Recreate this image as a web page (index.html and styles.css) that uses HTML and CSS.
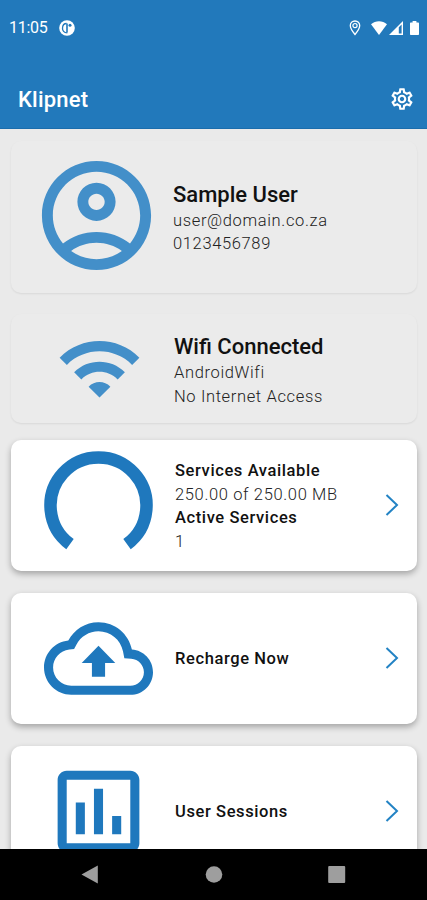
FILE: index.html
```html
<!DOCTYPE html>
<html lang="en">

<head>
    <meta charset="UTF-8">
    <meta name="viewport" content="width=device-width, initial-scale=1.0">
    <title>Klipnet</title>
    <link rel="stylesheet" href="styles.css">
</head>

<body>
    <header class="header">
        <div class="status-bar">
            <span class="time">11:05</span>
            <svg class="app-dot" viewBox="0 0 16 16">
                <circle cx="8" cy="8" r="7.8" fill="#fff"/>
                <path d="M8.300 12.900C4.800 12.900 3.400 10.600 3.500 8C3.600 5.200 5 3.500 7.600 3.500" fill="none" stroke="#2279bb" stroke-width="1.300"/>
                <path d="M8 3.500v9" stroke="#2279bb" stroke-width="1.600"/>
                <circle cx="11" cy="5.200" r="1.500" fill="#2279bb"/>
            </svg>
            <div class="status-icons">
                <svg class="pin" viewBox="0 0 12 16">
                    <path d="M6 1C3.300 1 1.300 3 1.300 5.600C1.300 9 6 14.500 6 14.500S10.700 9 10.700 5.600C10.700 3 8.700 1 6 1z" fill="none" stroke="#fff" stroke-width="1.300"/>
                    <circle cx="6" cy="5.600" r="2.100" fill="none" stroke="#fff" stroke-width="1.200"/>
                </svg>
                <svg class="signal-wifi" viewBox="0 0 16 14">
                    <path d="M0 3.200C4.500-.8 11.500-.8 16 3.200L8 14z" fill="#fff"/>
                </svg>
                <svg class="signal-cell" viewBox="0 0 14 14">
                    <path d="M0 14L14 0v14z" fill="#fff"/>
                    <path d="M9.800 6.200L12.600 3.400v9.200H9.800z" fill="#2279bb"/>
                </svg>
                <svg class="battery" viewBox="0 0 9 14">
                    <path d="M2.600 0h3.800v1.400H8c.6 0 1 .4 1 1V13c0 .6-.4 1-1 1H1c-.6 0-1-.4-1-1V2.400c0-.6.4-1 1-1h1.600z" fill="#fff"/>
                </svg>
            </div>
        </div>
        <div class="app-bar">
            <h1>Klipnet</h1>
            <svg class="settings" viewBox="0 0 24 24">
                <path d="M19.430 12.980c.04-.32.070-.64.070-.98 0-.34-.03-.66-.07-.98l2.110-1.650c.19-.15.240-.42.120-.64l-2-3.460c-.09-.16-.26-.25-.44-.25-.06 0-.12.010-.17.030l-2.490 1c-.52-.4-1.080-.73-1.690-.98l-.38-2.650C14.460 2.180 14.250 2 14 2h-4c-.25 0-.46.180-.49.420l-.38 2.650c-.61.250-1.170.59-1.690.98l-2.490-1c-.06-.02-.12-.03-.18-.03-.17 0-.34.090-.43.250l-2 3.460c-.13.220-.07.490.120.640l2.110 1.650c-.04.320-.07.650-.07.980s.030.660.070.980l-2.110 1.650c-.19.150-.24.420-.12.640l2 3.460c.09.160.260.250.440.250.060 0 .12-.01.170-.03l2.490-1c.52.400 1.080.730 1.690.980l.38 2.650c.03.240.240.420.490.420h4c.25 0 .46-.18.490-.42l.38-2.650c.61-.25 1.170-.59 1.690-.98l2.490 1c.06.020.120.030.180.030.17 0 .34-.09.430-.25l2-3.460c.12-.22.070-.49-.12-.64l-2.110-1.650zm-1.980-1.710c.04.310.050.520.050.730 0 .21-.02.430-.05.730l-.14 1.130.89.700 1.080.840-.7 1.210-1.270-.51-1.040-.42-.9.680c-.43.320-.84.560-1.250.73l-1.060.430-.16 1.130-.2 1.350h-1.400l-.19-1.350-.16-1.130-1.060-.43c-.43-.18-.83-.41-1.230-.71l-.91-.7-1.060.430-1.270.510-.7-1.210 1.080-.84.890-.7-.14-1.130c-.03-.31-.05-.54-.05-.74s.02-.43.050-.73l.14-1.130-.89-.7-1.080-.84.700-1.210 1.270.510 1.040.420.900-.68c.43-.32.840-.56 1.250-.73l1.060-.43.160-1.130.2-1.350h1.390l.19 1.350.16 1.130 1.060.430c.43.180.830.410 1.230.710l.91.700 1.060-.43 1.270-.51.700 1.210-1.070.850-.89.700.14 1.130zM12 8c-2.210 0-4 1.790-4 4s1.790 4 4 4 4-1.790 4-4-1.790-4-4-4zm0 6c-1.100 0-2-.9-2-2s.9-2 2-2 2 .9 2 2-.9 2-2 2z"/>
            </svg>
        </div>
    </header>

    <main class="content">
        <section class="card flat profile">
            <div class="icon">
                <svg class="icon-user" viewBox="0 0 24 24">
                    <path d="M12 2C6.480 2 2 6.480 2 12s4.480 10 10 10 10-4.480 10-10S17.520 2 12 2zM7.350 18.500C8.660 17.560 10.260 17 12 17s3.340.560 4.650 1.500C15.340 19.440 13.740 20 12 20s-3.340-.56-4.650-1.500zm10.790-1.380C16.450 15.800 14.320 15 12 15s-4.450.800-6.140 2.120C4.700 15.730 4 13.950 4 12c0-4.420 3.580-8 8-8s8 3.580 8 8c0 1.950-.7 3.730-1.860 5.120zM12 6c-1.930 0-3.500 1.570-3.500 3.500S10.070 13 12 13s3.500-1.570 3.500-3.500S13.930 6 12 6zm0 5c-.83 0-1.500-.67-1.500-1.500S11.170 8 12 8s1.500.670 1.500 1.500S12.830 11 12 11z"/>
                </svg>
            </div>
            <div class="text">
                <h2 class="name">Sample User</h2>
                <p class="email">user@domain.co.za</p>
                <p class="phone">0123456789</p>
            </div>
        </section>

        <section class="card flat wifi">
            <div class="icon">
                <svg class="icon-wifi" viewBox="0 0 24 24">
                    <path d="M1 9l2 2c4.970-4.970 13.030-4.970 18 0l2-2C16.930 2.930 7.080 2.930 1 9zm8 8l3 3 3-3c-1.650-1.660-4.340-1.660-6 0zm-4-4l2 2c2.760-2.760 7.240-2.760 10 0l2-2C15.140 9.140 8.870 9.140 5 13z"/>
                </svg>
            </div>
            <div class="text">
                <h2>Wifi Connected</h2>
                <p>AndroidWifi</p>
                <p>No Internet Access</p>
            </div>
        </section>

        <section class="card action">
            <div class="icon">
                <svg class="gauge" viewBox="0 0 109 109">
                    <path d="M26 93.100A48 48 0 1 1 83 93.100" fill="none" stroke="#1f78bd" stroke-width="12.500"/>
                </svg>
            </div>
            <div class="text">
                <h3>Services Available</h3>
                <p>250.00 of 250.00 MB</p>
                <h3>Active Services</h3>
                <p>1</p>
            </div>
            <svg class="chevron" viewBox="0 0 14 22"><path d="M1.500 1L12 11L1.500 21"/></svg>
        </section>

        <section class="card action">
            <div class="icon">
                <svg viewBox="0 0 24 24">
                    <path d="M19.350 10.040C18.670 6.590 15.640 4 12 4 9.110 4 6.600 5.640 5.350 8.040 2.340 8.360 0 10.910 0 14c0 3.310 2.690 6 6 6h13c2.760 0 5-2.240 5-5 0-2.640-2.050-4.780-4.650-4.960zM19 18H6c-2.210 0-4-1.790-4-4 0-2.050 1.530-3.760 3.560-3.970l1.070-.11.500-.95C8.080 7.140 9.940 6 12 6c2.620 0 4.880 1.860 5.390 4.430l.3 1.500 1.530.110c1.560.100 2.780 1.410 2.780 2.960 0 1.650-1.350 3-3 3zM8.300 13h2.250v3h2.900v-3h2.250L12 9.200z"/>
                </svg>
            </div>
            <div class="text">
                <h3>Recharge Now</h3>
            </div>
            <svg class="chevron" viewBox="0 0 14 22"><path d="M1.500 1L12 11L1.500 21"/></svg>
        </section>

        <section class="card action">
            <div class="icon">
                <svg viewBox="0 0 24 24">
                    <path d="M9 17H7v-7h2v7zm4 0h-2V7h2v10zm4 0h-2v-4h2v4zm2 2H5V5h14v14zm0-16H5c-1.100 0-2 .9-2 2v14c0 1.100.900 2 2 2h14c1.100 0 2-.9 2-2V5c0-1.100-.9-2-2-2z"/>
                </svg>
            </div>
            <div class="text">
                <h3>User Sessions</h3>
            </div>
            <svg class="chevron" viewBox="0 0 14 22"><path d="M1.500 1L12 11L1.500 21"/></svg>
        </section>
    </main>

    <nav class="nav-bar">
        <svg viewBox="0 0 20 20"><path d="M1.500 9.500L17.800.6v18z"/></svg>
        <svg viewBox="0 0 20 20"><circle cx="10" cy="9.500" r="8.300"/></svg>
        <svg viewBox="0 0 20 20"><rect x="1.200" y="1" width="17" height="17" rx="1"/></svg>
    </nav>
</body>

</html>
```
FILE: styles.css
```css
* {
    box-sizing: border-box;
}

body {
    font-family: Roboto, sans-serif;
    display: flex;
    flex-direction: column;
    height: 900px;
    margin: 0;
    overflow: hidden;
    background-color: #eaeaea;
    color: #111;
}

h1,
h2,
h3,
p {
    margin: 0;
}

svg {
    display: block;
    flex-shrink: 0;
}

/* Header */
.header {
    height: 129px;
    flex-shrink: 0;
    background-color: #2279bb;
    border-bottom: 1px solid #1b6dac;
    color: #fff;
}

.status-bar {
    display: flex;
    align-items: center;
    height: 54px;
    padding: 1px 8px 0 9px;
}

.time {
    width: 50px;
    font-size: 16px;
    letter-spacing: -0.3px;
}

.app-dot {
    width: 16px;
    height: 16px;
}

.status-icons {
    display: flex;
    align-items: center;
    margin-left: auto;
}

.pin {
    width: 12px;
    height: 16px;
    margin-right: 10px;
}

.signal-wifi {
    width: 16px;
    height: 14px;
    margin-right: 2px;
}

.signal-cell {
    width: 14px;
    height: 14px;
    margin-right: 7px;
}

.battery {
    width: 9px;
    height: 14px;
}

.app-bar {
    display: flex;
    justify-content: space-between;
    align-items: center;
    height: 74px;
    padding: 15px 12px 0 18px;
}

.app-bar h1 {
    padding-top: 1px;
    font-size: 22px;
    font-weight: 500;
    letter-spacing: 0.2px;
}

.settings {
    width: 26px;
    height: 26px;
    fill: #fff;
}

/* Cards */
.content {
    flex: 1;
    min-height: 0;
    overflow: hidden;
    padding: 12px 10px 0 11px;
}

.card {
    display: flex;
    align-items: center;
    border-radius: 10px;
}

.icon {
    display: flex;
    justify-content: center;
    width: 164px;
    flex-shrink: 0;
}

.icon svg {
    width: 109px;
    height: 109px;
    fill: #1f78bd;
}

.text {
    flex: 1;
    padding-top: 1px;
    font-size: 16.5px;
    line-height: 23.5px;
}

.text p {
    font-weight: 300;
    color: #222;
    letter-spacing: 0.64px;
}

.flat {
    background-color: #ebebeb;
    box-shadow: 0 1px 2px rgba(0, 0, 0, 0.08);
}

.flat h2 {
    font-size: 22px;
    font-weight: 500;
    line-height: 28px;
}

.profile {
    height: 152px;
    margin-bottom: 21px;
}

.profile .text {
    margin-left: -2px;
    padding-top: 2px;
}

.wifi .text {
    margin-left: -1px;
    padding-top: 4px;
}

.wifi {
    height: 109px;
    margin-bottom: 17px;
}

.icon .icon-user {
    width: 131px;
    height: 131px;
    margin-left: 7px;
    margin-top: -3px;
    fill: #438fc9;
}

.icon .icon-wifi {
    width: 87px;
    height: 87px;
    margin-left: 13px;
    fill: #438fc9;
}

.action {
    height: 131px;
    margin-bottom: 22px;
    padding-bottom: 1px;
    padding-right: 18px;
    background-color: #fff;
    box-shadow: 0 3px 6px rgba(0, 0, 0, 0.3);
}

.action .icon {
    padding-left: 11px;
}

.action .text {
    padding-top: 2px;
}

.action h3 {
    font-size: 16.5px;
    font-weight: 500;
    letter-spacing: 0.6px;
}

.chevron {
    width: 14px;
    height: 22px;
    fill: none;
    stroke: #2383c4;
    stroke-width: 2;
}

/* System buttons */
.nav-bar {
    display: flex;
    justify-content: space-between;
    align-items: center;
    height: 51px;
    flex-shrink: 0;
    padding: 0 80px;
    background-color: #000;
    z-index: 1;
}

.nav-bar svg {
    width: 20px;
    height: 20px;
    fill: #9e9e9e;
}
```
